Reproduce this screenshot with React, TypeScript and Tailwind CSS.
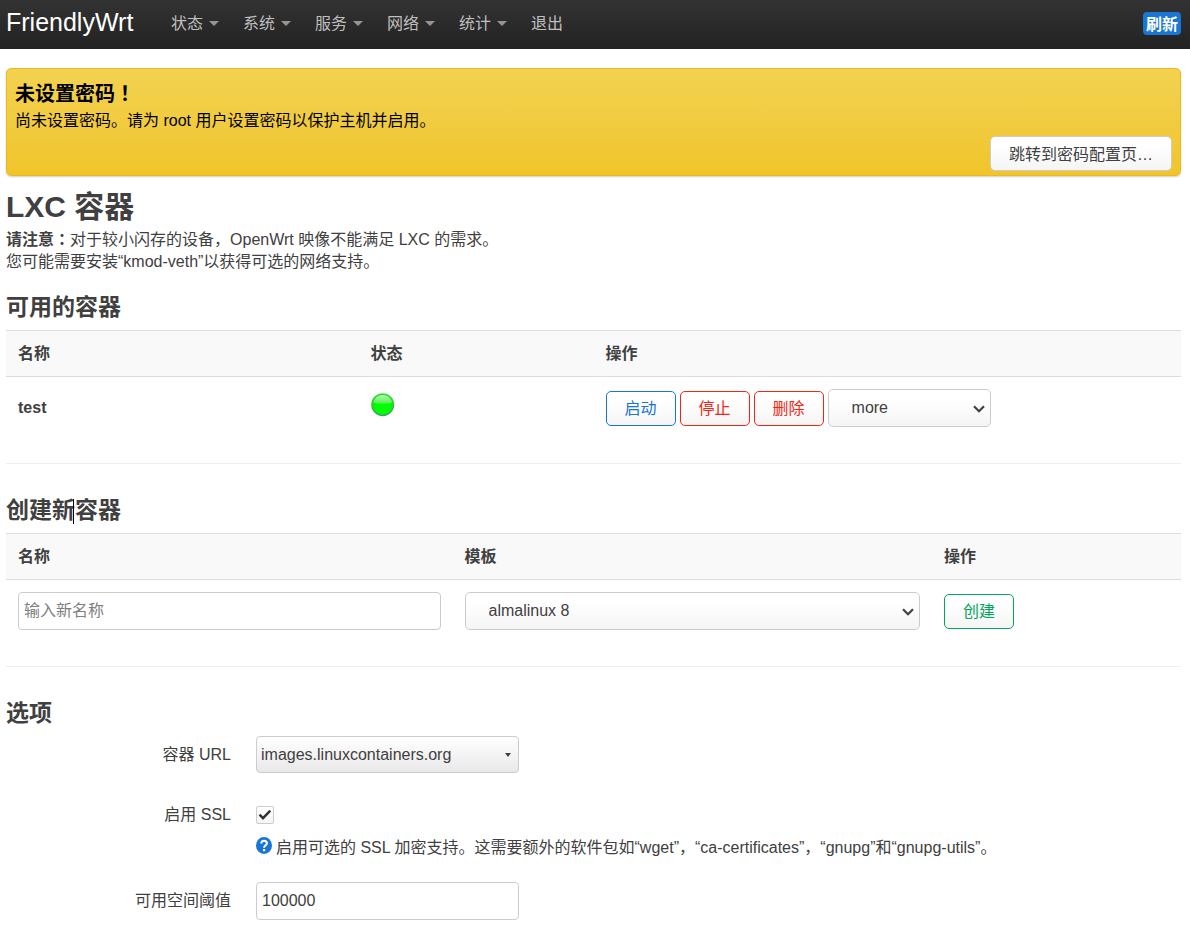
import type { ReactNode } from "react";

const menus = ["状态", "系统", "服务", "网络", "统计"];

// full-width marks that sit in the middle of their square
function Mark({ children }: { children: string }) {
  return <span className="font-['Noto_Sans_CJK_TC',sans-serif] leading-none">{children}</span>;
}

const buttonBase =
  "h-[35px] cursor-pointer rounded-[5px] border bg-gradient-to-b from-white from-25% to-[#f5f5f5] px-[18px] pt-0.5 leading-[22px]";

function Select({ label, className = "", children }: { label: string; className?: string; children: ReactNode }) {
  return (
    <div className={`relative ${className}`}>
      <select
        aria-label={label}
        className="block h-[38px] w-full appearance-none rounded-[5px] border border-[#ccc] bg-gradient-to-b from-white from-25% to-[#f5f5f5] pl-[23px] text-[#404040]"
      >
        {children}
      </select>
      <svg
        width="12"
        height="8"
        viewBox="0 0 12 8"
        aria-hidden="true"
        className="pointer-events-none absolute right-1.5 top-4"
      >
        <path d="M1 1.200L6 6.200L11 1.200" fill="none" stroke="#404040" strokeWidth="2.200" />
      </svg>
    </div>
  );
}

function Th({ children, className = "" }: { children: ReactNode; className?: string }) {
  return (
    <th
      scope="col"
      className={`h-[47px] border-y border-[#ddd] bg-[#f9f9f9] px-3 py-0 text-left font-bold ${className}`}
    >
      {children}
    </th>
  );
}

function SectionTitle({ children }: { children: ReactNode }) {
  return <h3 className="text-[23px] font-bold leading-[45px]">{children}</h3>;
}

function Divider() {
  return <hr className="my-6 border-t border-[#eee]" />;
}

function StatusBall() {
  return (
    <svg width="24" height="24" viewBox="0 0 24 24" role="img" aria-label="running" className="block">
      <defs>
        <linearGradient id="rim" x1="0" y1="0" x2="0" y2="1">
          <stop offset="0" stopColor="#5fd35f" />
          <stop offset="0.5" stopColor="#2bc82b" />
          <stop offset="1" stopColor="#3c9a78" />
        </linearGradient>
        <linearGradient id="shine" x1="0" y1="0" x2="0" y2="1">
          <stop offset="0" stopColor="#b5fbb0" />
          <stop offset="1" stopColor="#4df04d" />
        </linearGradient>
      </defs>
      <circle cx="11.700" cy="11.700" r="11.500" fill="url(#rim)" />
      <circle cx="11.700" cy="11.500" r="10.400" fill="#12e812" />
      <ellipse cx="11.700" cy="14" rx="8.400" ry="7" fill="#00ff00" />
      <path d="M2.300 9.600C3.300 4.800 7.100 1.900 11.700 1.900s8.400 2.900 9.400 7.700C18.300 11.200 5.100 11.200 2.300 9.600Z" fill="url(#shine)" />
    </svg>
  );
}

function HelpIcon() {
  return (
    <svg width="16" height="17" viewBox="0 0 16 17" aria-hidden="true" className="shrink-0">
      <ellipse cx="8" cy="8.500" rx="8" ry="8.500" fill="#1976d2" />
      <path
        d="M5.300 6.500C5.300 4.700 6.400 3.700 8.100 3.700S10.900 4.700 10.900 6.200C10.900 8.200 8.100 8.300 8.100 10.700"
        fill="none"
        stroke="#fff"
        strokeWidth="2"
      />
      <rect x="7" y="12" width="2.200" height="2.200" fill="#fff" />
    </svg>
  );
}

function Field({ id, label, children }: { id: string; label: string; children: ReactNode }) {
  return (
    <div className="flex items-start gap-[25px]">
      <label htmlFor={id} className="w-[225px] shrink-0 pt-2 text-right">
        {label}
      </label>
      <div className="min-w-0 flex-1">{children}</div>
    </div>
  );
}

export default function App() {
  return (
    <div className="bg-white font-['Liberation_Sans','Noto_Sans_CJK_SC',sans-serif] text-base leading-[22px] text-[#404040]">
      <header className="flex h-[49px] items-center bg-gradient-to-b from-[#333] to-[#222] pb-0.5 pl-1.5 pr-[9px]">
        <a href="#" className="w-[153px] pb-1 text-[25px] leading-[30px] text-white">
          FriendlyWrt
        </a>
        <nav className="flex flex-1 text-[#bfbfbf]">
          {menus.map((name) => (
            <a key={name} href="#" className="flex items-center gap-1.5 px-3">
              {name}
              <svg width="10" height="5" viewBox="0 0 10 5" aria-hidden="true">
                <path d="M0 0h10L5 5z" fill="#959595" />
              </svg>
            </a>
          ))}
          <a href="#" className="px-3">
            退出
          </a>
        </nav>
        <button className="h-[23px] cursor-pointer rounded-[4px] bg-[#1976d2] px-[3px] pt-0.5 font-bold leading-[21px] text-white">
          刷新
        </button>
      </header>

      <main className="pb-1.5 pl-1.5 pr-[9px] pt-[19px]">
        <div className="rounded-[5px] border border-[#eeb91a] bg-gradient-to-b from-[#f3d250] to-[#f0c52a] px-2 pb-1 pt-2.5 text-black shadow-[0_1px_2px_rgba(0,0,0,0.2)]">
          <h4 className="mb-px text-xl font-bold leading-[30px]">
            未设置密码<Mark>！</Mark>
          </h4>
          <p>尚未设置密码。请为 root 用户设置密码以保护主机并启用。</p>
          <div className="mt-1 flex justify-end">
            <button className={`${buttonBase} border-[#ccc] text-[#404040]`}>跳转到密码配置页…</button>
          </div>
        </div>

        <h2 className="mt-2 text-3xl font-bold leading-[45px]">LXC 容器</h2>
        <p>
          <strong>
            请注意<Mark>：</Mark>
          </strong>
          对于较小闪存的设备，OpenWrt 映像不能满足 LXC 的需求。
          <br />
          您可能需要安装“kmod-veth”以获得可选的网络支持。
        </p>

        <section className="mt-3">
          <SectionTitle>可用的容器</SectionTitle>
          <table className="w-full table-fixed border-separate border-spacing-0">
            <thead>
              <tr>
                <Th className="w-[30%]">名称</Th>
                <Th className="w-[20%]">状态</Th>
                <Th>操作</Th>
              </tr>
            </thead>
            <tbody>
              <tr>
                <td className="p-3 font-bold">test</td>
                <td className="px-3 pb-[18px] pt-3">
                  <StatusBall />
                </td>
                <td className="p-3">
                  <div className="flex items-center gap-1">
                    <button className={`${buttonBase} border-[#1976d2] text-[#1976d2]`}>启动</button>
                    <button className={`${buttonBase} border-[#f22613] text-[#f22613]`}>停止</button>
                    <button className={`${buttonBase} border-[#f22613] text-[#f22613]`}>删除</button>
                    <Select label="more" className="w-[163px]">
                      <option>more</option>
                    </Select>
                  </div>
                </td>
              </tr>
            </tbody>
          </table>
        </section>

        <Divider />

        <section>
          <SectionTitle>
            创建新
            <span className="relative">
              <span className="absolute -left-0.5 top-0.5 h-[25px] w-px bg-black" />
            </span>
            容器
          </SectionTitle>
          <table className="w-full table-fixed border-separate border-spacing-0">
            <thead>
              <tr>
                <Th className="w-[38%]">名称</Th>
                <Th>模板</Th>
                <Th className="w-[249px]">操作</Th>
              </tr>
            </thead>
            <tbody>
              <tr>
                <td className="p-3">
                  <input
                    type="text"
                    aria-label="名称"
                    placeholder="输入新名称"
                    className="block h-[38px] w-full rounded-[4px] border border-[#ccc] px-[5px] placeholder:text-[#808080]"
                  />
                </td>
                <td className="p-3">
                  <Select label="模板">
                    <option>almalinux 8</option>
                  </Select>
                </td>
                <td className="px-3 py-0">
                  <button className={`${buttonBase} border-[#00a65a] text-[#00a65a]`}>创建</button>
                </td>
              </tr>
            </tbody>
          </table>
        </section>

        <Divider />

        <section>
          <SectionTitle>选项</SectionTitle>
          <div className="flex flex-col gap-[23px]">
            <Field id="url" label="容器 URL">
              <div className="relative w-[263px]">
                <select
                  id="url"
                  className="block h-[37px] w-full appearance-none rounded-[4px] border border-[#ccc] bg-gradient-to-b from-white to-[#e9e9e9] pl-1"
                >
                  <option>images.linuxcontainers.org</option>
                </select>
                <svg
                  width="6"
                  height="4"
                  viewBox="0 0 6 4"
                  aria-hidden="true"
                  className="pointer-events-none absolute right-2 top-[17px]"
                >
                  <path d="M0 0h6L3 4z" fill="#404040" />
                </svg>
              </div>
            </Field>

            <Field id="ssl" label="启用 SSL">
              <div className="relative mt-2.5 h-[18px] w-[18px]">
                <input
                  id="ssl"
                  type="checkbox"
                  defaultChecked
                  className="peer block h-[18px] w-[18px] appearance-none rounded-[2px] border border-[#ccc] bg-gradient-to-b from-white to-[#f5f5f5]"
                />
                <svg
                  width="18"
                  height="18"
                  viewBox="0 0 18 18"
                  aria-hidden="true"
                  className="pointer-events-none absolute left-0 top-0 hidden peer-checked:block"
                >
                  <path d="M3.500 8.700L7 12.200L14.300 4.600" fill="none" stroke="#333" strokeWidth="2.400" />
                </svg>
              </div>
              <div className="mt-[13px] flex items-start gap-1">
                <HelpIcon />
                <p>
                  启用可选的 SSL 加密支持。这需要额外的软件包如“wget”，“ca-certificates”，“gnupg”和“gnupg-utils”。
                </p>
              </div>
            </Field>

            <Field id="threshold" label="可用空间阈值">
              <input
                id="threshold"
                type="text"
                defaultValue="100000"
                className="block h-[38px] w-[263px] rounded-[4px] border border-[#ccc] px-[5px]"
              />
            </Field>
          </div>
        </section>
      </main>
    </div>
  );
}
